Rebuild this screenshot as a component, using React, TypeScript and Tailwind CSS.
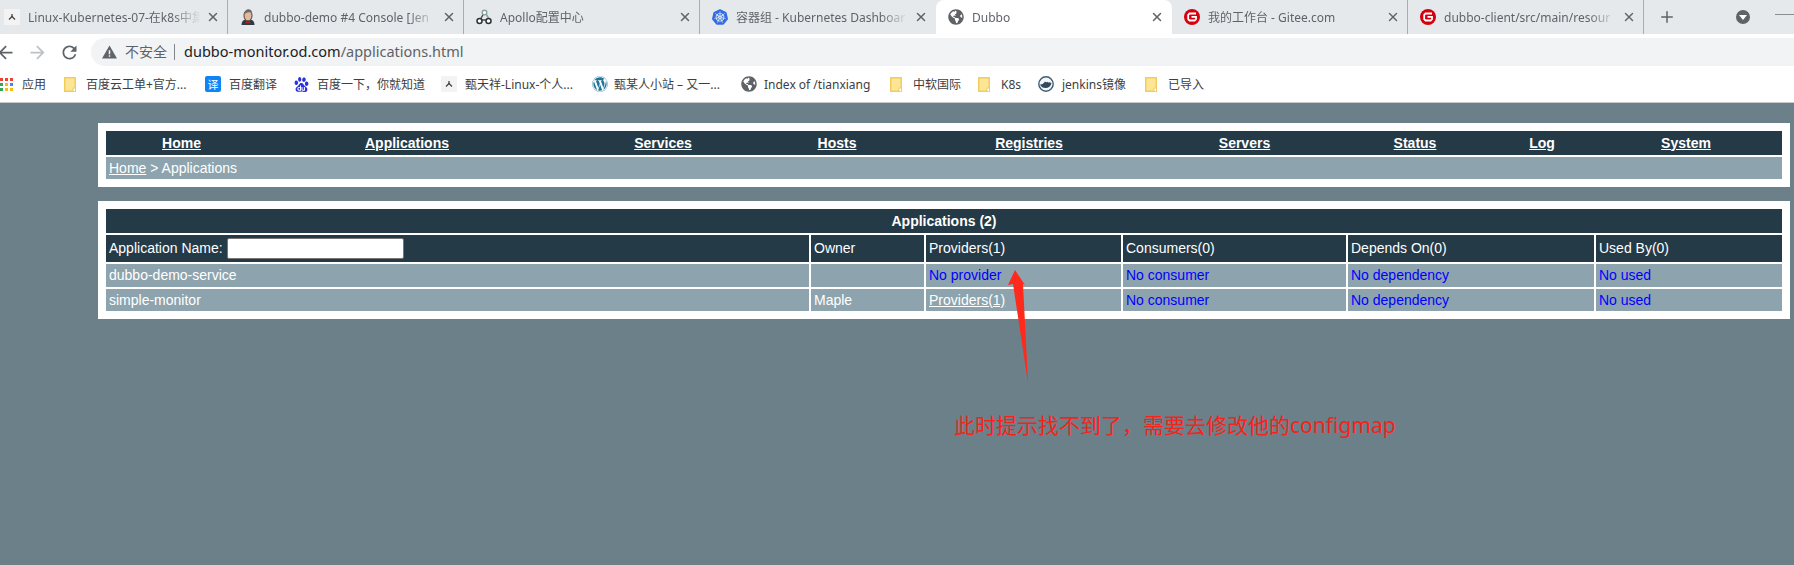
import React from "react";
import { FaGlobeAmericas, FaWordpress } from "react-icons/fa";
import { SiBaidu, SiKubernetes } from "react-icons/si";
import { X, Plus } from "lucide-react";

const ui = "font-['Noto_Sans','Noto_Sans_CJK_SC',sans-serif]";

const Tech = () => (
  <span className="flex h-4 w-4 shrink-0 items-center justify-center bg-[#f3f3f3]">
    <svg viewBox="0 0 16 16" className="h-4 w-4">
      <path d="M8 5v2.500M8 7.500L5 10.500M8 7.500l3 3" stroke="#444" strokeWidth="1.300" fill="none" />
    </svg>
  </span>
);

const Jenkins = () => (
  <svg viewBox="0 0 16 16" className="h-4 w-4 shrink-0">
    <path d="M1.500 16c0-3 1.500-5 3.500-5.500h6c2 .5 3.500 2.500 3.500 5.500z" fill="#2f3a44" />
    <ellipse cx="8" cy="6.500" rx="4" ry="5.500" fill="#e2b99d" stroke="#4b3a33" strokeWidth="1" />
    <path d="M4.500 5C4.500 1.500 7 .5 9 .5c2.500 0 3 2 2.800 3.500C10 3 7 3 4.500 5z" fill="#6c6a68" />
    <path d="M6 12.500l2 .8 2-.8v2l-2-.8-2 .8z" fill="#c0282d" />
  </svg>
);

const Apollo = () => (
  <svg viewBox="0 0 16 16" className="h-4 w-4 shrink-0" fill="none">
    <path d="M8 4L4 11h8" stroke="#4a4f4f" strokeWidth="1.500" />
    <path d="M9.500 4l3.500 6" stroke="#8aa39a" strokeWidth="1.500" />
    <circle cx="8.500" cy="3.500" r="2.300" stroke="#8aa39a" strokeWidth="1.400" fill="#fff" />
    <circle cx="3.500" cy="12" r="2.500" stroke="#2f3333" strokeWidth="1.500" fill="#fff" />
    <circle cx="12.500" cy="12" r="2.500" stroke="#2f3333" strokeWidth="1.500" fill="#fff" />
  </svg>
);

const Gitee = () => (
  <svg viewBox="0 0 16 16" className="h-4 w-4 shrink-0" fill="none">
    <circle cx="8" cy="8" r="8" fill="#d7000f" />
    <path d="M12 4.500H5.500L4.200 5.800v4.400l1.300 1.300h5.200L12 10.200V7.800H7.500" stroke="#fff" strokeWidth="1.800" />
  </svg>
);

const Globe = () => <FaGlobeAmericas className="h-4 w-4 shrink-0 text-[#5f6368]" />;
const Kube = () => <SiKubernetes className="h-4 w-4 shrink-0 text-[#326ce5]" />;

const Folder = () => (
  <svg viewBox="0 0 12 15" className="h-[15px] w-3 shrink-0">
    <path d="M.75.75h10.500v13.500H.75z" fill="#fde596" stroke="#f2cd5c" strokeWidth="1.500" />
    <path d="M9 11h2.500v3.500H9z" fill="#fff" stroke="#f2cd5c" strokeWidth="1" />
  </svg>
);

const Apps = () => (
  <span className="grid h-[13px] w-3 shrink-0 grid-cols-[3px_3px_3px] grid-rows-[3px_3px_3px] gap-[2px]">
    <i className="bg-[#ea4335]" />
    <i className="bg-[#ea4335]" />
    <i className="bg-[#ea4335]" />
    <i className="bg-[#34a853]" />
    <i className="bg-[#fbbc05]" />
    <i className="bg-[#4285f4]" />
    <i className="bg-[#34a853]" />
    <i className="bg-[#fbbc05]" />
    <i className="bg-[#fbbc05]" />
  </span>
);

const Translate = () => (
  <span className="flex h-4 w-4 shrink-0 items-center justify-center rounded-[2px] bg-[#0f85f5] text-[11px] leading-none text-white">
    译
  </span>
);

const Paw = () => <SiBaidu className="h-[15px] w-[15px] shrink-0 text-[#2932e1]" />;
const Wp = () => <FaWordpress className="h-4 w-4 shrink-0 text-[#21759b]" />;

const JenkinsMirror = () => (
  <svg viewBox="0 0 16 16" className="h-4 w-4 shrink-0">
    <circle cx="8" cy="8" r="7.200" fill="#f4f7f9" stroke="#3e5c73" strokeWidth="1.400" />
    <path d="M2 8.500c3-.2 4-1.500 5-3 .8 1 1.500 1 2.500.2.400.8 1 1 2 .6l2 .7c-.5 3-3 5-5.800 5C5 12 3 11 2 8.500z" fill="#2f4a5e" />
  </svg>
);

type TabProps = { icon: React.ReactNode; title: string; active?: boolean; divider?: boolean };

const Tab = ({ icon, title, active, divider }: TabProps) => (
  <div
    className={`flex h-[34px] w-[236px] shrink-0 items-center pl-3 ${
      active ? "rounded-t-[8px] bg-white" : ""
    } ${divider ? "border-r border-[#a9acb0]" : ""}`}
  >
    {icon}
    <span className="ml-2 w-[176px] overflow-hidden whitespace-nowrap pt-[2px] text-[12px] text-[#5f6368] [mask-image:linear-gradient(to_right,black_82%,transparent_98%)]">
      {title}
    </span>
    <X className="ml-[2px] h-[14px] w-[14px] shrink-0 text-[#5f6368]" strokeWidth={2.500} />
  </div>
);

const bookmarks: { w: string; gap: string; icon: React.ReactNode; label: string }[] = [
  { w: "w-[64px]", gap: "gap-[10px]", icon: <Apps />, label: "应用" },
  { w: "w-[141px]", gap: "gap-[10px]", icon: <Folder />, label: "百度云工单+官方..." },
  { w: "w-[89px]", gap: "gap-2", icon: <Translate />, label: "百度翻译" },
  { w: "w-[147px]", gap: "gap-[8px]", icon: <Paw />, label: "百度一下，你就知道" },
  { w: "w-[151px]", gap: "gap-2", icon: <Tech />, label: "甄天祥-Linux-个人..." },
  { w: "w-[149px]", gap: "gap-[6px]", icon: <Wp />, label: "甄某人小站 – 又一..." },
  { w: "w-[149px]", gap: "gap-[7px]", icon: <Globe />, label: "Index of /tianxiang" },
  { w: "w-[88px]", gap: "gap-[11px]", icon: <Folder />, label: "中软国际" },
  { w: "w-[60px]", gap: "gap-[11px]", icon: <Folder />, label: "K8s" },
  { w: "w-[107px]", gap: "gap-2", icon: <JenkinsMirror />, label: "jenkins镜像" },
  { w: "w-[70px]", gap: "gap-[11px]", icon: <Folder />, label: "已导入" },
];

const nav: [string, string][] = [
  ["Home", "w-[151px]"],
  ["Applications", "w-[300px]"],
  ["Services", "w-[212px]"],
  ["Hosts", "w-[136px]"],
  ["Registries", "w-[248px]"],
  ["Servers", "w-[183px]"],
  ["Status", "w-[158px]"],
  ["Log", "w-[96px]"],
  ["System", "w-[192px]"],
];

const dark = "flex items-center bg-[#253a47] px-[3px] text-white";
const light = "flex items-center bg-[#8da4ae] px-[3px] text-white";
const blue = "flex items-center bg-[#8da4ae] px-[3px] text-[#0000ff]";

export default function App() {
  return (
    <div className="relative h-[565px] w-full overflow-hidden bg-[#6c8089] font-['Liberation_Sans','Noto_Sans_CJK_SC',sans-serif] text-[14px]">
      {/* browser chrome */}
      <div className={ui}>
        <div className="relative flex h-[34px] bg-[#e6e9ec] pl-0">
          <div className="-ml-2 flex">
            <Tab icon={<Tech />} title="Linux-Kubernetes-07-在k8s中集" divider />
            <Tab icon={<Jenkins />} title="dubbo-demo #4 Console [Jen" divider />
            <Tab icon={<Apollo />} title="Apollo配置中心" divider />
            <Tab icon={<Kube />} title="容器组 - Kubernetes Dashboar" />
            <Tab icon={<Globe />} title="Dubbo" active />
            <Tab icon={<Gitee />} title="我的工作台 - Gitee.com" divider />
            <Tab icon={<Gitee />} title="dubbo-client/src/main/resour" divider />
          </div>
          <Plus className="ml-[14px] mt-[8px] h-[18px] w-[18px] text-[#5f6368]" strokeWidth={2} />
          <span className="ml-[60px] mt-[10px] flex h-[14px] w-[14px] items-center justify-center rounded-full bg-[#5f6368]">
            <span className="mt-px h-0 w-0 border-x-[4px] border-t-[5px] border-x-transparent border-t-white" />
          </span>
          <span className="ml-[25px] mt-[14px] h-px flex-1 bg-[#8a8d91]" />
        </div>

        <div className="flex h-[32px] items-end bg-white">
          <div className="-ml-[5px] flex h-[28px] items-center gap-[11px]">
            <svg viewBox="0 0 24 24" className="h-[21px] w-[21px] fill-[#5f6368]">
              <path d="M20 11H7.830l5.590-5.590L12 4l-8 8 8 8 1.410-1.410L7.830 13H20v-2z" />
            </svg>
            <svg viewBox="0 0 24 24" className="h-[21px] w-[21px] fill-[#bdc1c6]">
              <path d="M12 4l-1.410 1.410L16.170 11H4v2h12.170l-5.580 5.590L12 20l8-8z" />
            </svg>
            <svg viewBox="0 0 24 24" className="h-[21px] w-[21px] fill-[#5f6368]">
              <path d="M17.650 6.350A7.958 7.958 0 0 0 12 4c-4.420 0-7.990 3.580-7.990 8s3.570 8 7.990 8c3.730 0 6.840-2.550 7.730-6h-2.080A5.990 5.990 0 0 1 12 18c-3.310 0-6-2.690-6-6s2.690-6 6-6c1.660 0 3.140.690 4.220 1.780L13 11h7V4l-2.350 2.350z" />
            </svg>
          </div>
          <div className="ml-[11px] flex h-[28px] flex-1 items-center rounded-l-[14px] bg-[#f1f3f4] pl-[11px]">
            <svg viewBox="0 0 16 14" className="h-[14px] w-[15px] fill-[#5f6368]">
              <path d="M8 0l8 14H0z" />
              <path d="M7.200 5h1.600v4.500H7.200zM7.200 10.500h1.600V12H7.200z" fill="#f1f3f4" />
            </svg>
            <span className="ml-2 text-[14px] leading-none text-[#5f6368]">不安全</span>
            <span className="ml-[7px] h-[16px] w-px bg-[#80868b]" />
            <span className="ml-[9px] text-[14.5px] text-[#5f6368]">
              <span className="text-[#202124]">dubbo-monitor.od.com</span>/applications.html
            </span>
          </div>
        </div>

        <div className="flex h-[36px] items-center border-0 bg-white">
          {bookmarks.map((b) => (
            <div key={b.label} className={`flex shrink-0 items-center whitespace-nowrap text-[12px] text-[#3c4043] ${b.w} ${b.gap}`}>
              {b.icon}
              <span className="pt-[2px]">{b.label}</span>
            </div>
          ))}
        </div>
        <div className="h-px bg-[#c9cccf]" />
      </div>

      {/* page */}
      <div className="ml-[98px] mt-5 w-[1692px] bg-white p-2">
        <div className="flex h-6 bg-[#253a47]">
          {nav.map(([label, w]) => (
            <span key={label} className={`flex items-center justify-center font-bold text-white underline ${w}`}>
              {label}
            </span>
          ))}
        </div>
        <div className={`${light} mt-[2px] h-[22px] whitespace-pre`}>
          <span className="underline">Home</span> &gt; Applications
        </div>
      </div>

      <div className="ml-[98px] mt-[14px] w-[1692px] bg-white p-2">
        <div className="grid grid-cols-[703px_113px_195px_223px_246px_186px] grid-rows-[24px_27px_23px_22px] gap-[2px]">
          <div className={`${dark} col-span-6 justify-center font-bold`}>Applications (2)</div>

          <div className={dark}>
            Application Name:
            <input className="ml-[4px] h-[21px] w-[177px] rounded-[2px] border border-[#767676] bg-white" />
          </div>
          <div className={dark}>Owner</div>
          <div className={dark}>Providers(1)</div>
          <div className={dark}>Consumers(0)</div>
          <div className={dark}>Depends On(0)</div>
          <div className={dark}>Used By(0)</div>

          <div className={light}>dubbo-demo-service</div>
          <div className={light}></div>
          <div className={blue}>No provider</div>
          <div className={blue}>No consumer</div>
          <div className={blue}>No dependency</div>
          <div className={blue}>No used</div>

          <div className={light}>simple-monitor</div>
          <div className={light}>Maple</div>
          <div className={light}>
            <span className="underline">Providers(1)</span>
          </div>
          <div className={blue}>No consumer</div>
          <div className={blue}>No dependency</div>
          <div className={blue}>No used</div>
        </div>
      </div>

      {/* annotation */}
      <svg className="absolute left-[1000px] top-[262px] h-[130px] w-[40px]" viewBox="0 0 40 130">
        <path d="M15 8L8 23l5-1 15 99-5-99 2 1z" fill="#ff2a1c" />
      </svg>
      <span className="absolute left-[954px] top-[410px] whitespace-nowrap font-['Noto_Sans','Noto_Sans_CJK_SC',sans-serif] text-[21px] leading-[30px] text-[#f5231b]">
        此时提示找不到了，需要去修改他的configmap
      </span>
    </div>
  );
}
